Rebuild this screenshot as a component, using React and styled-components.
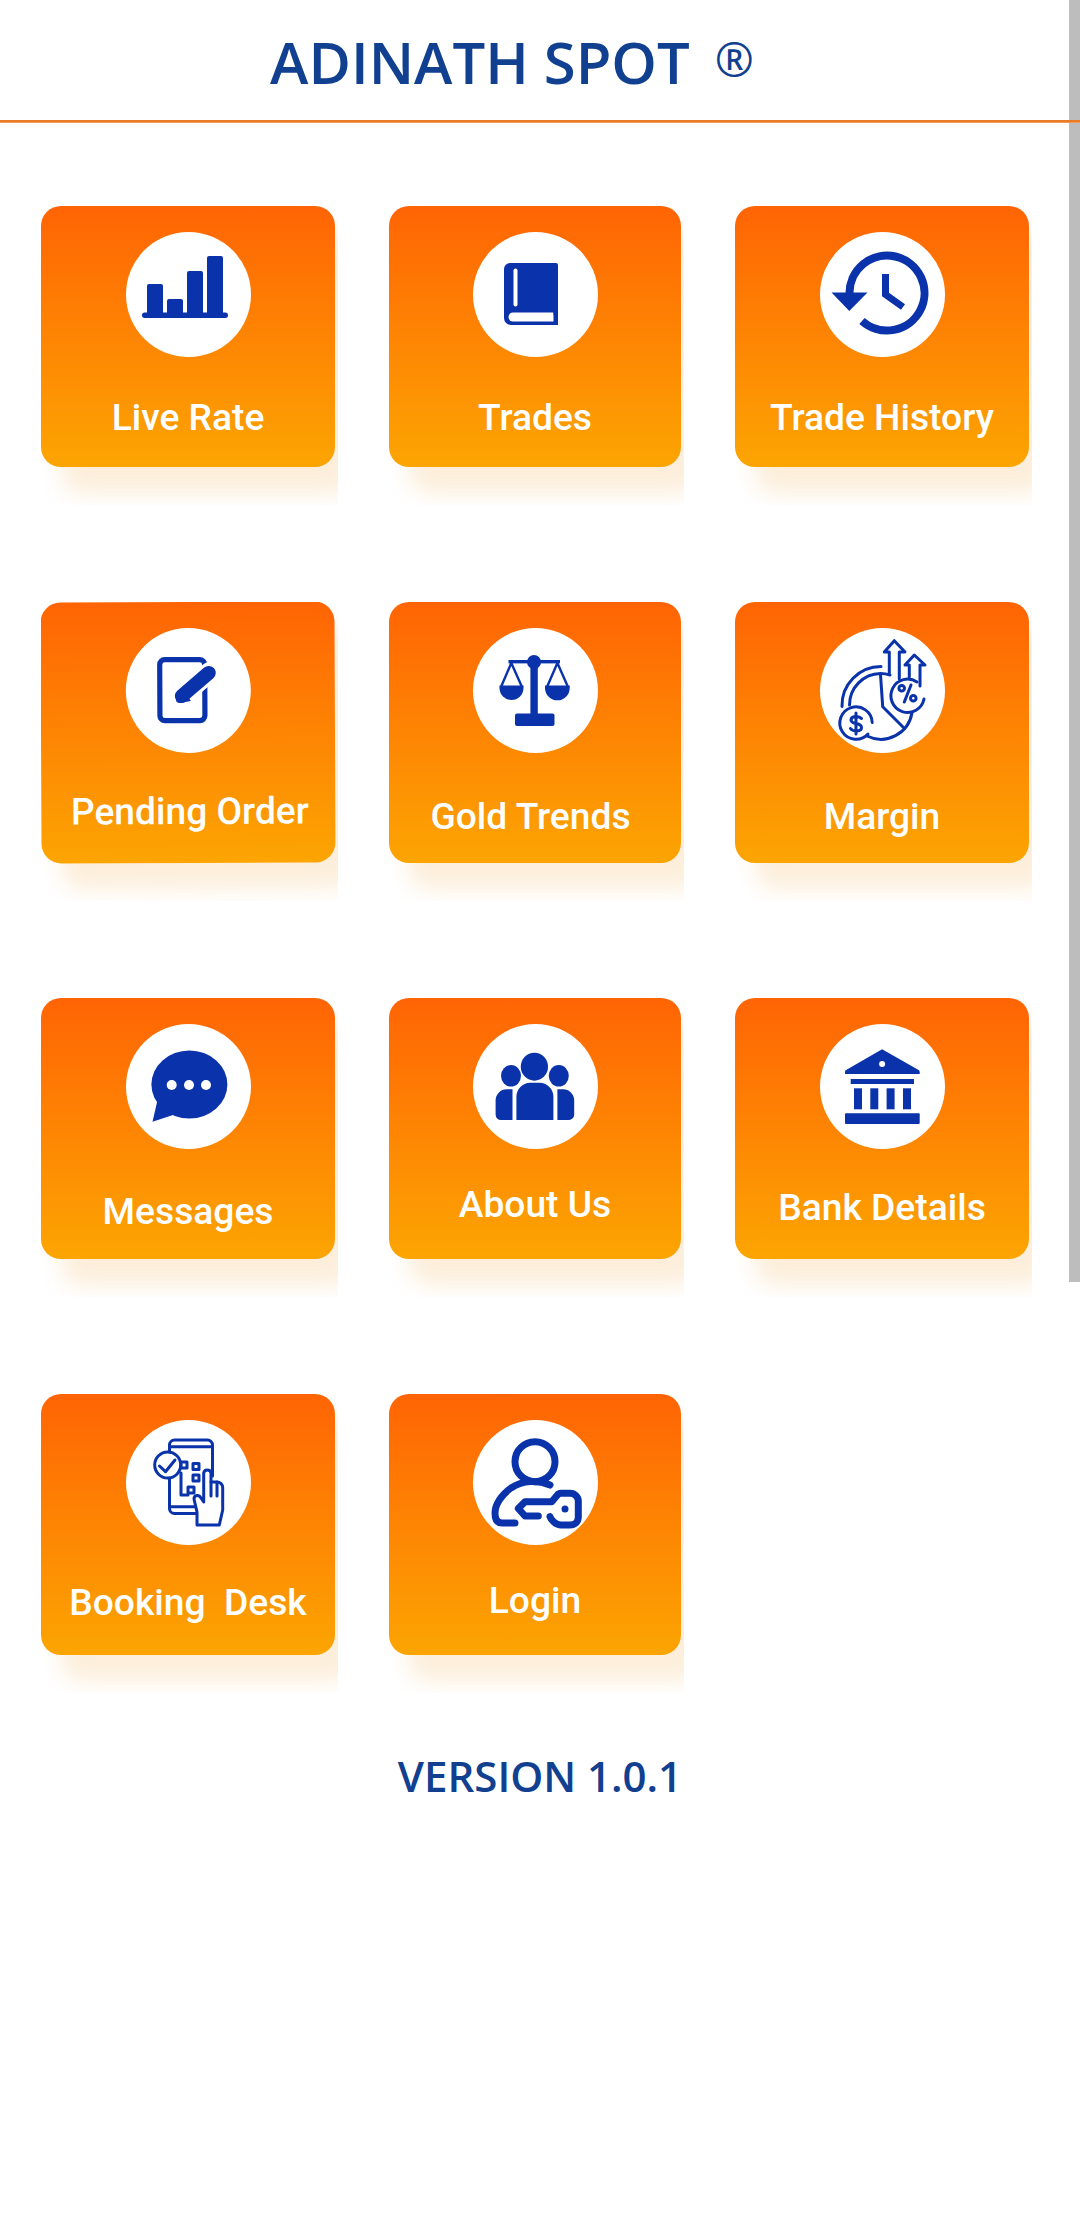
import React from 'react'
import styled, { createGlobalStyle } from 'styled-components'

const BLUE = '#0a33ab'

const GlobalStyle = createGlobalStyle`
  html, body {
    margin: 0;
    padding: 0;
    background: #fff;
    overflow: hidden;
  }
`

const Page = styled.div`
  width: 1080px;
  height: 2220px;
  background: #fff;
`

const Scrollbar = styled.div`
  position: fixed;
  top: 0;
  right: 0;
  width: 11px;
  height: 1282px;
  background: #bdbdbd;
`

const Header = styled.header`
  height: 120px;
  display: flex;
  align-items: center;
  justify-content: center;
  padding-right: 56px;
`

const HeaderLine = styled.div`
  position: relative;
  height: 3px;
  background: linear-gradient(180deg, #e87a28 66%, #f6b88a 100%);
`

const Title = styled.h1`
  position: relative;
  margin: 0;
  font-family: "Open Sans", "Liberation Sans", sans-serif;
  font-weight: 600;
  font-size: 58px;
  line-height: 64px;
  color: #10408f;
  white-space: pre;
`

const Registered = styled.span`
  margin-left: 25px;
  font-size: 47px;
  font-weight: 500;
  vertical-align: 7px;
`

const Grid = styled.div`
  display: grid;
  grid-template-columns: 297px 295px 297px;
  column-gap: 51px;
  row-gap: 97px;
  padding: 83px 0 0 41px;
`

const Cell = styled.div`
  overflow: hidden;
  padding: 0 3px 38px 0;
`

const Card = styled.a`
  height: 261px;
  display: flex;
  flex-direction: column;
  align-items: center;
  border-radius: 20px;
  background: linear-gradient(180deg, #ff6404 0%, #fca502 100%);
  box-shadow: 20px 26px 22px rgba(238, 168, 72, 0.2);
  transform: rotate(${p => p.$tilt || 0}deg);
`

const Badge = styled.div`
  width: 125px;
  height: 125px;
  margin-top: 26px;
  flex: none;
  border-radius: 50%;
  background: #fff;
  svg {
    display: block;
  }
`

const Label = styled.div`
  margin-top: ${p => p.$top}px;
  margin-left: ${p => p.$shift || 0}px;
  font-family: Roboto, "Liberation Sans", sans-serif;
  font-weight: 500;
  font-size: 37.2px;
  line-height: 44px;
  color: #fff;
  white-space: pre;
`

const Version = styled.div`
  margin-top: 57px;
  text-align: center;
  font-family: "Open Sans", "Liberation Sans", sans-serif;
  font-weight: 600;
  font-size: 42px;
  line-height: 52px;
  color: #10408f;
`

const Icon = ({ children }) => (
  <svg width="125" height="125" viewBox="0 0 125 125" fill={BLUE} stroke="none">
    {children}
  </svg>
)

const Line = ({ w = 3, children }) => (
  <g fill="none" stroke={BLUE} strokeWidth={w} strokeLinecap="round" strokeLinejoin="round">
    {children}
  </g>
)

const BarsIcon = () => (
  <Icon>
    <rect x="21" y="52" width="16" height="32" rx="2" />
    <rect x="41" y="67" width="16" height="17" rx="2" />
    <rect x="61" y="39" width="16" height="45" rx="2" />
    <rect x="81" y="24" width="16" height="60" rx="2" />
    <rect x="16" y="80.5" width="86" height="5.5" rx="2.7" />
  </Icon>
)

const BookIcon = () => (
  <Icon>
    <path d="M37 31h46a2 2 0 0 1 2 2v60H38a7 7 0 0 1-7-7V37a6 6 0 0 1 6-6z" />
    <rect x="40.5" y="36.5" width="4" height="38" rx="2" fill="#fff" />
    <path d="M40 80.5h40.5v9H40a4.5 4.5 0 0 1 0-9z" fill="#fff" />
    <rect x="80.5" y="80" width="4.5" height="3" />
  </Icon>
)

const HistoryIcon = () => (
  <Icon>
    <path d="M11.5 60.5h36L29.3 79z" />
    <Line w={8}>
      <path d="M29.5 62A37.5 37.5 0 1 1 42 89" strokeLinecap="butt" />
    </Line>
    <Line w={7}>
      <path d="M65.5 42v20.5L83 75" strokeLinecap="butt" strokeLinejoin="miter" />
    </Line>
  </Icon>
)

const PendingIcon = () => (
  <Icon>
    <Line w={5.2}>
      <rect x="34" y="31.6" width="45" height="61" rx="5" />
    </Line>
    <g fill="none" strokeLinecap="round">
      <path d="M54 70L84 44" stroke="#fff" strokeWidth="20" />
      <path d="M56 68L83 45" stroke={BLUE} strokeWidth="14" />
    </g>
    <path d="M50 67l7-7 8 13-11 2a4 4 0 0 1-4-4z" />
  </Icon>
)

const ScalesIcon = () => (
  <Icon>
    <rect x="57.4" y="32" width="7.4" height="56" />
    <rect x="42" y="85.5" width="39.5" height="12.5" rx="2" />
    <circle cx="61" cy="34" r="7" />
    <rect x="35.5" y="32" width="51.5" height="3.4" />
    <Line w={2.4}>
      <path d="M38.3 35L28 59M38.3 35L49 59M84.4 35L74 59M84.4 35L95 59" />
    </Line>
    <path d="M26.5 57.5h24v2.5a12 12 0 0 1-24 0z" />
    <path d="M72 57.5h24.7v2.5a12.3 12.3 0 0 1-24.7 0z" />
  </Icon>
)

const MarginIcon = () => (
  <Icon>
    <Line w={3}>
      <path d="M22 78.5A39 39 0 0 1 61 38.5" />
      <path d="M29.5 77A31.5 31.5 0 0 1 60.5 45.5C64 45.5 67 46 70 47" />
      <path d="M60.5 46.5L62.7 78.7L82.7 98.7" />
      <path d="M47 108A31.5 31.5 0 0 0 92 84.5" />
      <path d="M52.2 94.5A16.2 16.2 0 1 0 48 106" />
      <path d="M97 54A16.7 16.7 0 1 0 104 71" />
      <path d="M69.3 45V24H64.3L74.3 12.7L85 24H79.3V51" />
      <path d="M89.3 49V37H85L94.3 27L105 37H100V58" />
      <path d="M91 57L84.3 74" />
      <circle cx="81.7" cy="60.3" r="2.8" />
      <circle cx="93.3" cy="70.3" r="2.8" />
      <path d="M41.5 90.5C39 87.5 31 87.5 31 92C31 97 41.5 94 41.5 99.5C41.5 104 33 104 30.5 100.5M36 85V106" />
    </Line>
  </Icon>
)

const MessageIcon = () => (
  <Icon>
    <ellipse cx="63.4" cy="60.5" rx="38" ry="34" />
    <path d="M32 74L26.5 97.7L50 90z" />
    <circle cx="45.7" cy="61" r="5" fill="#fff" />
    <circle cx="63" cy="61" r="5" fill="#fff" />
    <circle cx="80" cy="61" r="5" fill="#fff" />
  </Icon>
)

const UsersIcon = () => (
  <Icon>
    <ellipse cx="61.4" cy="42.7" rx="13.6" ry="14" />
    <ellipse cx="38" cy="51.8" rx="10" ry="10.8" />
    <ellipse cx="85.8" cy="51.8" rx="10" ry="10.8" />
    <path d="M57 58.7h9a14 14 0 0 1 14.4 14V96H43.4V72.7A14 14 0 0 1 57 58.7z" />
    <path d="M39.5 65.3V96H28a5.4 5.4 0 0 1-5.4-5.4V76a11 11 0 0 1 11-10.7z" />
    <path d="M84.4 65.3V96H96a5.4 5.4 0 0 0 5.2-5.4V76a11 11 0 0 0-11-10.7z" />
  </Icon>
)

const BankIcon = () => (
  <Icon>
    <path d="M62.1 25.3L98.6 46a2.2 2.2 0 0 1 1.1 2v2H25v-2a2.2 2.2 0 0 1 1.1-2z" />
    <circle cx="62.1" cy="40" r="3" fill="#fff" />
    <rect x="30.7" y="55" width="63.3" height="5" />
    <rect x="34" y="64.3" width="8" height="21" />
    <rect x="50.3" y="64.3" width="8" height="21" />
    <rect x="66.6" y="64.3" width="8" height="21" />
    <rect x="83" y="64.3" width="8" height="21" />
    <rect x="25" y="89.3" width="74.7" height="10.7" rx="1" />
  </Icon>
)

const BookingIcon = () => (
  <Icon>
    <Line w={3}>
      <path d="M43.5 32V25a5 5 0 0 1 5-5H81.5a5 5 0 0 1 5 5V56" />
      <path d="M43.5 58V88.5a5 5 0 0 0 5 5H71" />
      <path d="M43.5 26.7H86.5M43.5 86.7H71" />
      <circle cx="41.7" cy="45" r="13" />
      <path d="M33.5 46L39.5 51.7L49 40" />
      <path d="M55 53V75H62" />
      <rect x="55" y="42" width="6" height="6" />
      <rect x="67" y="43.5" width="6" height="6" />
      <rect x="67" y="55" width="6" height="6" />
      <rect x="62" y="67" width="6" height="6" />
      <path d="M71 105V92L68 79C68 75 73 74 75 78L77.7 82V53A3.7 3.7 0 0 1 85 53V62H91A5.7 5.7 0 0 1 96.7 67.7V90L93.3 105Z" fill="#fff" />
      <path d="M85 62V76M91 62V76" />
    </Line>
  </Icon>
)

const LoginIcon = () => (
  <Icon>
    <circle cx="92" cy="89" r="3.5" />
    <Line w={7}>
      <circle cx="62" cy="41.7" r="20" />
      <path d="M77 65C65 60 50 60 38 68C28 75 22 85 22 93C22 99 24 103 29 103H42" />
      <path d="M65.3 96H52L45.3 88.5L52 81.7H78.7L84 75.5C85 74 86 73.3 88 73.3H97C102 73.3 105.3 77 105.3 81V97C105.3 102 101.5 105 97 105H88C83 105 78 100 77 96.7" />
    </Line>
  </Icon>
)

const items = [
  { name: 'Live Rate', icon: BarsIcon, top: 37.5 },
  { name: 'Trades', icon: BookIcon, top: 37.5 },
  { name: 'Trade History', icon: HistoryIcon, top: 37.5 },
  { name: 'Pending Order', icon: PendingIcon, top: 35.5, shift: 3, tilt: -0.25 },
  { name: 'Gold Trends', icon: ScalesIcon, top: 40.5, shift: -9 },
  { name: 'Margin', icon: MarginIcon, top: 40.5 },
  { name: 'Messages', icon: MessageIcon, top: 39.5 },
  { name: 'About Us', icon: UsersIcon, top: 32.5 },
  { name: 'Bank Details', icon: BankIcon, top: 35.5 },
  { name: 'Booking\u00a0\u00a0Desk', icon: BookingIcon, top: 34.5 },
  { name: 'Login', icon: LoginIcon, top: 32.5 },
]

const App = () => {
  return (
    <Page>
      <GlobalStyle />
      <Scrollbar />
      <Header>
        <Title>ADINATH SPOT<Registered>®</Registered></Title>
      </Header>
      <HeaderLine />
      <Grid>
        {items.map(item => (
          <Cell key={item.name}>
            <Card $tilt={item.tilt}>
              <Badge>
                <item.icon />
              </Badge>
              <Label $top={item.top} $shift={item.shift}>{item.name}</Label>
            </Card>
          </Cell>
        ))}
      </Grid>
      <Version>VERSION 1.0.1</Version>
    </Page>
  )
}

export default App
